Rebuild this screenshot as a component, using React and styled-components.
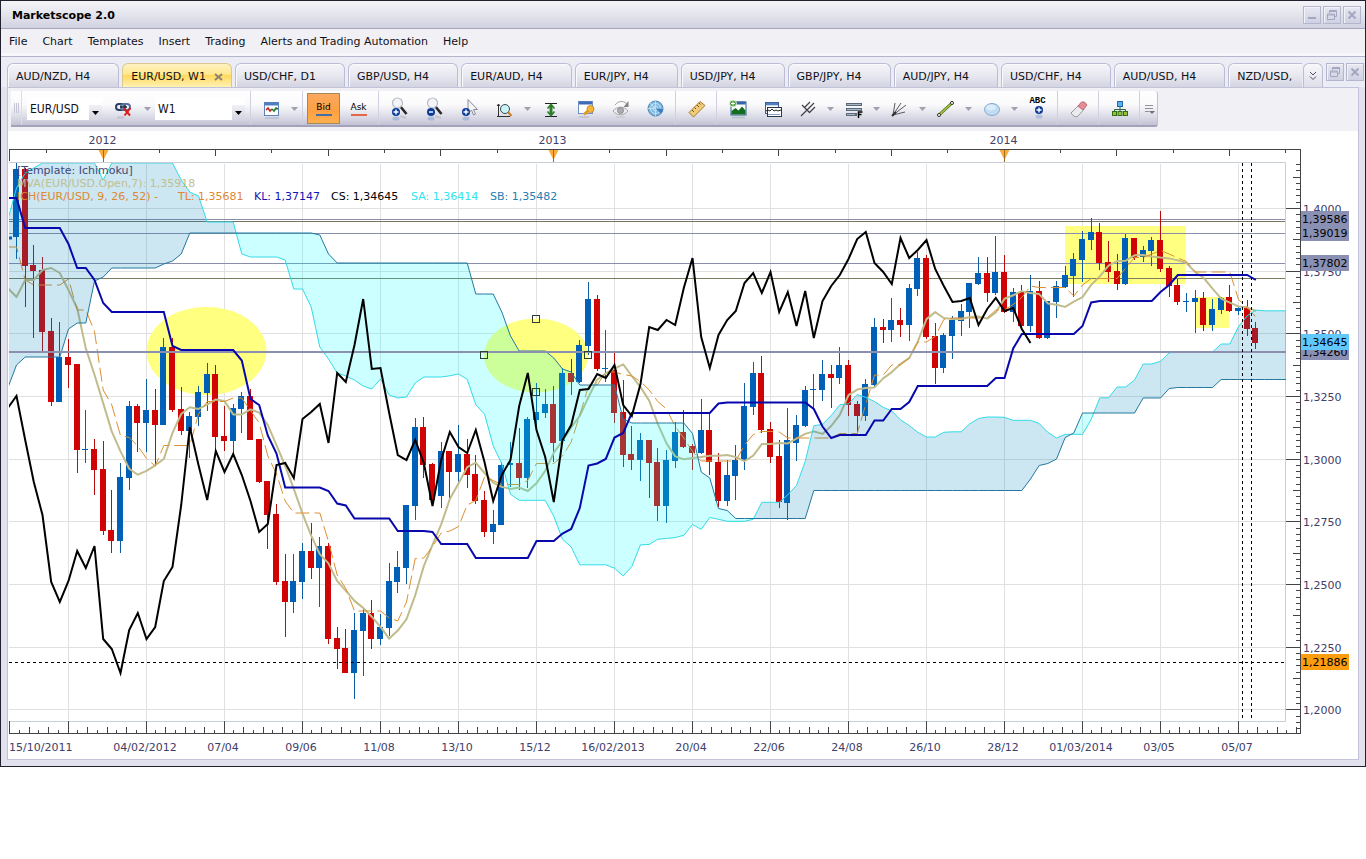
import React from "react";
import styled, { createGlobalStyle, css } from "styled-components";

const GlobalStyle = createGlobalStyle`
  * { box-sizing: border-box; }
  body { margin: 0; background: #ffffff; font-family: "DejaVu Sans", Verdana, sans-serif; font-size: 11px; color: #101018; }
  button, select { font: inherit; color: inherit; }
`;

/* ---------- window shell ---------- */

const Window = styled.div`
  display: flex;
  flex-direction: column;
  border: 1px solid #20202e;
  background: #e2e2ee;
`;

const TitleBar = styled.header`
  display: flex;
  align-items: center;
  justify-content: space-between;
  height: 28px;
  padding: 0 4px 0 11px;
  background: linear-gradient(#f3f3f7, #e6e6ee 45%, #d0d2e0);
  border-bottom: 1px solid #a6a6c2;
`;

const Title = styled.h1`
  margin: 0;
  padding-top: 2px;
  font-size: 11px;
  font-weight: 700;
  color: #000000;
`;

const FrameButtons = styled.div`
  display: flex;
  gap: 2px;
`;

const FrameButton = styled.button`
  display: flex;
  align-items: center;
  justify-content: center;
  width: 18px;
  height: 18px;
  padding: 0;
  border: 1px solid #b4b6ce;
  background: linear-gradient(#e8e8f2, #cfd1e2);
  box-shadow: inset 1px 1px 0 #f2f2f8;
`;

const MenuBar = styled.nav`
  display: flex;
  align-items: center;
  gap: 15px;
  height: 28px;
  padding: 0 8px 2px;
  background: #f0f0f5;
  border-bottom: 1px solid #b4b4cc;
  box-shadow: inset 0 -3px 0 #f7f7fb;
`;

const MenuItem = styled.button`
  border: 0;
  padding: 0;
  background: none;
  white-space: nowrap;
  color: #101018;
`;

const TabStrip = styled.div`
  display: flex;
  padding: 6px 1px 0 6px;
  background: #ececf4;
`;

const Tabs = styled.div`
  display: flex;
  flex: 1;
  gap: 3px;
  min-width: 0;
  overflow: hidden;
`;

const Tab = styled.button`
  display: flex;
  flex: none;
  align-items: center;
  gap: 8px;
  height: 24px;
  padding: 2px ${(p) => (p.$active ? 8 : 28)}px 0 8px;
  border: 1px solid #bcbcd6;
  border-bottom: 0;
  border-radius: 6px 6px 0 0;
  background: linear-gradient(#f4f4f8, #e8e8f0 50%, #d4d4e2);
  box-shadow: inset 1px 1px 0 #fafafd;
  white-space: nowrap;
  color: #101018;
  ${(p) =>
    p.$active &&
    css`
      border-color: #d8c890;
      background: linear-gradient(#fff2c0, #ffe890 45%, #ffd95c 50%, #fff2b4);
      box-shadow: none;
    `}
`;

const OverflowTab = styled.button`
  display: flex;
  align-items: center;
  justify-content: center;
  width: 20px;
  height: 24px;
  margin: 0 3px 0 1px;
  padding: 0;
  border: 1px solid #bcbcd6;
  border-bottom: 0;
  border-radius: 6px 6px 0 0;
  background: linear-gradient(#f8f8fb, #dedee9);
`;

const ChildButtons = styled(FrameButtons)`
  height: 18px;
`;

const Workspace = styled.main`
  padding: 0 6px 6px;
  background: #e2e2ee;
`;

const Panel = styled.section`
  border: 1px solid #c2c2d8;
  background: #ffffff;
`;

/* ---------- toolbar ---------- */

const ToolArea = styled.div`
  height: 43px;
  padding: 3px;
  background: #f0f0f5;
`;

const Toolbar = styled.div`
  display: inline-flex;
  align-items: stretch;
  height: 36px;
  border-bottom: 2px solid #a2a2ba;
  border-right: 1px solid #c0c0d2;
  border-radius: 0 3px 3px 0;
  background: linear-gradient(#ffffff, #fafafc 40%, #dcdce8 75%, #c2c2d4);
`;

const Grip = styled.div`
  display: flex;
  align-items: center;
  justify-content: center;
  gap: 1px;
  width: 11px;
  margin-right: 5px;
  border-right: 1px solid #dcdce8;
`;

const GripLine = styled.span`
  width: 1px;
  height: 10px;
  background: #c4c4d2;
`;

const Combo = styled.label`
  display: grid;
  grid-template-columns: 1fr 13px;
  align-self: center;
  width: ${(p) => (p.$wide ? 90 : 75)}px;
  height: 22px;
  margin: 2px ${(p) => (p.$wide ? 3 : 5)}px 0 ${(p) => (p.$wide ? 2 : 0)}px;
  background: #ffffff;
`;

const ComboSelect = styled.select`
  grid-area: 1 / 1 / 2 / 3;
  min-width: 0;
  padding: 0 15px 0 3px;
  border: 0;
  appearance: none;
  background: transparent;
  font-family: "DejaVu Sans Condensed", "DejaVu Sans", Tahoma, sans-serif;
  font-size: 12px;
`;

const ComboArrow = styled.span`
  grid-area: 1 / 2 / 2 / 3;
  display: flex;
  align-items: center;
  justify-content: center;
  align-self: end;
  height: 15px;
  background: linear-gradient(#f0f0f6, #d4d4e0);
  pointer-events: none;
`;

const ToolButton = styled.button`
  display: flex;
  flex-direction: column;
  align-items: center;
  justify-content: center;
  width: ${(p) => (p.$menu ? 11 : p.$last ? 14 : 35)}px;
  padding: 2px 0 0;
  border: 0;
  background: none;
`;

const PriceButton = styled(ToolButton)`
  width: 33px;
  margin: 2px 1px 1px;
  padding: 0;
  gap: 1px;
  font-size: 9px;
  line-height: 12px;
  color: #000000;
  ${(p) =>
    p.$pressed &&
    css`
      border: 1px solid #9c8a5c;
      background: linear-gradient(#fba860, #ffa040 60%, #ffb050);
    `}
`;

const Underline = styled.span`
  width: 16px;
  height: 2px;
  background: ${(p) => p.$color};
`;

const Separator = styled.span`
  width: 6px;
  border-right: 3px solid transparent;
  background: linear-gradient(90deg, transparent 2px, #d0d0e0 2px) no-repeat;
`;

const Icon = ({ children, size = 24 }) => (
  <svg width={size} height={size} viewBox={`0 0 ${size} ${size}`} fill="none" aria-hidden="true">
    {children}
  </svg>
);

const DownArrow = ({ color = "#a0a0b0" }) => (
  <svg width="7" height="4" viewBox="0 0 7 4" aria-hidden="true">
    <path d="M0 0h7L3.5 4z" fill={color} />
  </svg>
);

const PlusBadge = ({ x, y, minus }) => (
  <g>
    <circle cx={x} cy={y} r="4" fill="#0c3c98" />
    <path d={minus ? `M${x - 2} ${y}h4` : `M${x - 2.5} ${y}h5M${x} ${y - 2.5}v5`} stroke="#fff" strokeWidth="1.4" />
    <ellipse cx={x} cy={y + 6.5} rx="3.5" ry="2" fill="#4c78c0" opacity=".3" />
  </g>
);

const ICONS = {
  link: (
    <>
      <rect x="3" y="7" width="9" height="6" rx="3" stroke="#2c4066" strokeWidth="2" />
      <rect x="8" y="7" width="9" height="6" rx="3" stroke="#58709c" strokeWidth="2" />
      <path d="M7 10h7" stroke="#20304c" strokeWidth="1.6" />
      <path d="M11 11.5l6 7M17.5 11l-6 7.500" stroke="#dc1c1c" strokeWidth="2" />
      <path d="M4 20.500h7" stroke="#a0a0b0" strokeWidth="2" opacity=".4" />
    </>
  ),
  chart: (
    <>
      <rect x="4.500" y="5.500" width="14" height="13" fill="#fff" stroke="#5c84b8" />
      <path d="M5 7h13" stroke="#4c7cc4" strokeWidth="3" />
      <path d="M6 13l2-2 2 3 2-2" stroke="#c02020" strokeWidth="1.500" />
      <path d="M12 12l2 2 2-3 2 1" stroke="#207828" strokeWidth="1.500" />
      <path d="M5 21h14" stroke="#a0a8c0" strokeWidth="2" opacity=".4" />
    </>
  ),
  zoomIn: (
    <>
      <path d="M12 9l6.500 8" stroke="#282828" strokeWidth="2.600" />
      <circle cx="9.500" cy="6" r="5" fill="#f2f4f8" stroke="#b8bcc4" strokeWidth="1.200" />
      <path d="M12 19l6 2" stroke="#a0a0b0" strokeWidth="2" opacity=".4" />
      <PlusBadge x={8} y={15} />
    </>
  ),
  zoomOut: (
    <>
      <path d="M12 9l6.500 8" stroke="#282828" strokeWidth="2.600" />
      <circle cx="9.500" cy="6" r="5" fill="#f2f4f8" stroke="#b8bcc4" strokeWidth="1.200" />
      <path d="M12 19l6 2" stroke="#a0a0b0" strokeWidth="2" opacity=".4" />
      <PlusBadge x={8} y={15} minus />
    </>
  ),
  cursor: (
    <>
      <path d="M10 2.500v14l3.500-3.500 2 5 2-1-2-4.500h4z" fill="#f4f4f8" stroke="#8c8c98" />
      <PlusBadge x={8} y={15} />
    </>
  ),
  zoomAxis: (
    <>
      <path d="M5.500 7v12M4 9l1.500-2L7 9M4 19.500h13" stroke="#303030" />
      <circle cx="12" cy="12" r="4.500" fill="#c8f4f8" stroke="#404850" />
      <path d="M15 15l3.500 4" stroke="#d08020" strokeWidth="2" />
    </>
  ),
  height: (
    <>
      <path d="M6 6.500h12M6 19.500h12" stroke="#202020" />
      <path d="M12 8v10" stroke="#2c7c28" strokeWidth="3" />
      <path d="M8.500 11.500L12 7.500l3.500 4M8.500 14.500l3.500 4 3.500-4" stroke="#2c7c28" strokeWidth="1.600" />
    </>
  ),
  windowKey: (
    <>
      <rect x="4.500" y="4.500" width="14" height="12" fill="#fff" stroke="#6c90c4" />
      <path d="M5 6h13" stroke="#3c6cb8" strokeWidth="3" />
      <path d="M10 17.500l5-4.500" stroke="#e09820" strokeWidth="3" />
      <circle cx="16.500" cy="12" r="3.500" fill="#f4b83c" stroke="#d08c18" />
      <path d="M5 20h10" stroke="#a0a8c0" strokeWidth="2" opacity=".4" />
    </>
  ),
  eye: (
    <>
      <path d="M4 14c4-5 11-5 15 0-4 5-11 5-15 0z" fill="#eeeef2" stroke="#a4a4a4" />
      <circle cx="11.500" cy="13.500" r="3" fill="#acacb0" stroke="#8c8c90" />
      <path d="M6 8c3-4 8-5 12-1" stroke="#a0a0a0" />
      <path d="M19.500 4v6h-5z" fill="#848484" />
      <path d="M7 20h9" stroke="#b0b0b8" opacity=".6" />
    </>
  ),
  globe: (
    <>
      <circle cx="11.500" cy="11.500" r="7.500" fill="#7cb8e0" stroke="#4c84b4" />
      <circle cx="11.500" cy="11.500" r="5" stroke="#c8e4f4" />
      <circle cx="11.500" cy="11.500" r="2.500" stroke="#c8e4f4" />
      <path d="M4 11.500h15M11.500 4v15M6 6l11 11" stroke="#c8e4f4" strokeWidth=".8" />
      <path d="M11.500 11.500L17 17a7.500 7.500 0 0 0 2-5.500z" fill="#3c80bc" />
    </>
  ),
  ruler: (
    <>
      <path d="M4 15.500L15 4.500l5 4L8.500 20z" fill="#f0cc78" stroke="#a8782c" />
      <path d="M7 13l2 2M9.500 10.500l1.500 1.500M12 8l2 2M14 6l1.500 1.500" stroke="#70501c" />
    </>
  ),
  picture: (
    <>
      <rect x="5" y="5" width="15" height="13" fill="#fff" stroke="#2c5c98" />
      <path d="M5.500 6h14" stroke="#3464a8" strokeWidth="3" />
      <path d="M5.500 17.500V14l4-3 3 2.500 3.500-4 3.500 4v4z" fill="#146c20" />
      <circle cx="7" cy="6.500" r="3.500" fill="#4c9c3c" stroke="#e8f0e0" />
      <path d="M5 6.500h4M7 4.500v4" stroke="#fff" />
      <path d="M6 20.500h13" stroke="#80a090" strokeWidth="2" opacity=".35" />
    </>
  ),
  windows: (
    <>
      <rect x="4.500" y="5.500" width="13" height="11" fill="#fff" stroke="#385c90" />
      <path d="M5 7h12" stroke="#5080c0" strokeWidth="2.600" />
      <rect x="6.500" y="10.500" width="14" height="9" fill="#fff" stroke="#283848" />
      <path d="M5 14l2-1 2 1 2-2 2 2 2-1 2 1 3-1" stroke="#202020" />
      <path d="M7 17.500h12" stroke="#88a0c8" />
    </>
  ),
  pitchfork: <path d="M5 19L18 6M6 8l8 8M8.500 10.500L14 5M13.500 15.500L19 10" stroke="#404048" strokeWidth="1.200" />,
  fibo: (
    <>
      <path d="M4 7.500h16M4 12.500h16M4 17.500h11" stroke="#586878" strokeWidth="3" />
      <path d="M5 7.500h14M5 12.500h14M5 17.500h8" stroke="#a8b8c4" />
      <path d="M16.500 21v-6h4M16.500 17.500h3" stroke="#000" strokeWidth="1.500" />
    </>
  ),
  fan: (
    <>
      <path d="M5 18L7 6M5 18l8-12M5 18L18 8M5 18l12-3" stroke="#58585c" />
      <path d="M4 19l4-4" stroke="#303030" strokeWidth="2" />
    </>
  ),
  line: (
    <>
      <path d="M5 18L18 6" stroke="#506c1c" strokeWidth="3" />
      <path d="M5 18L18 6" stroke="#a8d038" strokeWidth="1.400" />
      <circle cx="5" cy="18" r="1.600" fill="#e4e4d8" stroke="#404030" />
      <circle cx="18" cy="6" r="1.600" fill="#e4e4d8" stroke="#404030" />
    </>
  ),
  ellipse: (
    <>
      <ellipse cx="12" cy="12.500" rx="7.500" ry="6" fill="#c0dcf4" stroke="#84a8cc" />
      <ellipse cx="11" cy="10.500" rx="5" ry="3" fill="#dcecfa" />
    </>
  ),
  eraser: (
    <>
      <path d="M4 16l8-8 5 4.500-7 7.500q-4 0-6-4z" fill="#ececf0" stroke="#98989c" />
      <path d="M11 9l3.500-4q3-1.500 5.500 3l-4 5z" fill="#e88c94" stroke="#b86c78" />
    </>
  ),
  tree: (
    <>
      <path d="M12 9v4M6.500 15v-2.500h11V15M12 12v3" stroke="#286840" />
      <rect x="9.500" y="4.500" width="5" height="5" fill="#5cb0f0" stroke="#2068b0" />
      <rect x="4.500" y="14.500" width="4" height="4" fill="#94c434" stroke="#386c14" />
      <rect x="10" y="14.500" width="4" height="4" fill="#94c434" stroke="#386c14" />
      <rect x="15.500" y="14.500" width="4" height="4" fill="#94c434" stroke="#386c14" />
    </>
  ),
};

const AbcIcon = styled.span`
  display: flex;
  flex-direction: column;
  align-items: center;
  font-family: "Liberation Mono", monospace;
  font-size: 9px;
  font-weight: 700;
  line-height: 8px;
  color: #000000;
`;

const Glyph = ({ kind }) => (
  <Icon size={12}>
    {kind === "minimize" && <path d="M2 9h8" stroke="#a4a6c0" strokeWidth="2" />}
    {kind === "restore" && (
      <path d="M3.500 4V1.500h7v6H8M1.500 5h7v5.500h-7zM1.500 6h7M3.500 2.500h7" stroke="#a4a6c0" />
    )}
    {kind === "close" && <path d="M2.500 2.500l7 7M9.500 2.500l-7 7" stroke="#a4a6c0" strokeWidth="2" />}
  </Icon>
);

/* ---------- chart data: vertical positions of high, body top, body bottom, low ---------- */

const CANDLES = `b163 169 237 259|r168 169 266 307|r245 265 271 338|r257 270 332 351|r318 331 402 406|b322 357 402 402|r339 357 365 388|r364 364 450 473|b410 449 450 463|r439 449 470 495
r441 469 531 535|r490 530 541 553|b463 477 541 553|b401 406 478 490|r404 406 423 452|b379 410 423 452|r389 410 425 465|b338 347 425 425|r338 347 410 412|r387 409 431 435
b412 416 431 458|b386 392 417 426|b363 374 393 411|r365 374 437 450|r406 436 441 451|b404 408 441 457|b392 396 409 433|r389 396 440 440|r439 439 482 483|r481 481 515 549
r504 514 582 585|r554 581 602 637|b554 581 602 613|b543 551 582 599|r523 551 568 579|b537 546 568 607|r543 546 639 644|r627 638 649 669|r629 648 673 673|b613 630 673 699
b609 613 631 676|r600 613 639 649|b614 627 639 645|b563 581 628 636|b551 567 582 593|b505 505 568 584|b418 427 506 520|r417 427 465 478|r463 464 500 504|b442 451 496 508
r451 451 472 498|b425 454 472 485|r439 454 475 488|r455 474 501 504|r491 500 532 537|b510 524 532 544|b462 465 525 525|b442 463 465 487|r428 463 478 490|b417 419 478 488
b383 412 420 430|b389 404 413 418|r386 404 443 462|b368 373 441 443|r359 373 382 395|b340 345 382 383|b282 299 346 355|r295 299 369 371|b330 368 369 382|r353 370 413 423
r380 412 455 467|r426 454 460 470|b433 440 460 481|r440 440 463 498|r448 462 506 521|b450 460 506 523|b422 432 461 468|r410 432 447 448|r444 446 453 470|b399 430 453 454
r413 430 462 475|r453 462 501 507|b460 475 501 506|b445 460 476 500|b383 406 460 470|b362 373 407 415|r356 373 430 433|r422 429 457 463|r440 456 502 508|b408 440 503 520
b415 425 443 461|b386 390 426 427|b374 389 390 410|b360 374 390 401|r365 374 378 408|b347 365 378 384|r360 365 405 416|r401 404 416 432|b379 384 416 421|b318 327 385 387
r319 327 330 343|b298 320 330 342|r308 320 325 337|b284 288 325 341|b252 258 289 296|r255 258 337 339|r323 336 368 384|b333 335 368 373|b316 320 336 359|b304 311 321 336
b283 283 312 328|b257 273 284 285|r257 273 293 302|b236 272 293 295|r255 272 312 313|b288 292 312 322|r285 292 326 327|b275 291 326 332|r281 291 338 339|b301 301 338 339
b281 286 302 318|b266 275 287 288|b253 259 276 297|b231 239 260 282|b218 232 240 250|r223 232 263 270|r241 262 272 282|r254 271 284 290|b234 238 284 285|r238 238 258 260
b246 250 257 262|b237 240 251 266|r211 240 269 272|r266 268 286 297|r279 285 302 305|b293 301 302 312|b290 298 302 333|r292 298 325 331|b299 309 325 331|b297 298 310 314
r285 297 311 312|b306 308 311 315|r300 308 329 336|r322 328 343 349`
  .split(/[|\n]/)
  .map((row) => {
    const [high, top, bottom, low] = row.slice(1).split(" ").map(Number);
    const up = row[0] === "b";
    return { up, high, top, bottom, low, open: up ? bottom : top, close: up ? top : bottom };
  });

/* readings whose look-back starts before the first visible candle */
const repeat = (value, n) => Array(n).fill(value);
const TENKAN_SEED = [247, 280, 285, 285, 285, 285, 279, 310, 310];
const KIJUN_SEED = [198, ...repeat(228, 5), 244, 268, 268, 280, 303, ...repeat(312, 7), 346, ...repeat(350, 7)];
const AVERAGE_SEED = [297, 280, 280, 270, 268, 273];
const SPAN_A_SEED = [
  188, 173, 168, ...repeat(163, 7), 180, ...repeat(163, 8), 180, 192, 196, ...repeat(222, 4), 254, ...repeat(257, 4),
  260, 289, 289, 307, 347, 359, 373, 376, 380, 386, 389, 379, 395, 398, 397, 383, 377, 377, 377,
];
const SPAN_B_SEED = [
  365, ...repeat(357, 5), 329, 323, 323, 281, 277, ...repeat(268, 6), 264, 261, 254, ...repeat(233, 15), 235, 254,
  ...repeat(263, 16), 294, 294, 294, 312, 336, ...repeat(351, 4), 358, 369, 372, ...repeat(385, 5), 419,
  ...repeat(423, 7),
];

const midRange = (i, n) => {
  const slice = CANDLES.slice(i - n + 1, i + 1);
  return (Math.min(...slice.map((c) => c.high)) + Math.max(...slice.map((c) => c.low))) / 2;
};

const TENKAN = CANDLES.map((_, i) => TENKAN_SEED[i] ?? midRange(i, 9));
const KIJUN = CANDLES.map((_, i) => KIJUN_SEED[i] ?? midRange(i, 26));
const AVERAGE = CANDLES.map(
  (_, i) => AVERAGE_SEED[i] ?? CANDLES.slice(i - 6, i + 1).reduce((sum, c) => sum + c.open, 0) / 7
);
const SPAN_A = Array.from({ length: 148 }, (_, i) => SPAN_A_SEED[i] ?? (TENKAN[i - 26] + KIJUN[i - 26]) / 2);
const SPAN_B = Array.from({ length: 148 }, (_, i) => SPAN_B_SEED[i] ?? midRange(i - 26, 52));
const CHIKOU = CANDLES.slice(26).map((c) => c.close);

const STEP = 26 / 3;
const xAt = (i) => 16.5 + i * STEP;
const toPoints = (first, values) => [[xAt(-1), first], ...values.map((y, i) => [xAt(i), y])];
const path = (points) => "M" + points.map(([x, y]) => `${x.toFixed(1)} ${y.toFixed(1)}`).join("L");

const A_POINTS = toPoints(220, SPAN_A);
const B_POINTS = toPoints(388, SPAN_B);

/* split the cloud where the two spans cross */
const CLOUD = (() => {
  const runs = [];
  let run = { bull: A_POINTS[0][1] < B_POINTS[0][1], a: [A_POINTS[0]], b: [B_POINTS[0]] };
  for (let i = 1; i < A_POINTS.length; i++) {
    const [x, a] = A_POINTS[i];
    const b = B_POINTS[i][1];
    const bull = a < b;
    if (bull !== run.bull) {
      const [px, pa] = A_POINTS[i - 1];
      const pb = B_POINTS[i - 1][1];
      const t = (pb - pa) / (pb - pa + a - b);
      const cross = [px + (x - px) * t, pa + (a - pa) * t];
      run.a.push(cross);
      run.b.push(cross);
      runs.push(run);
      run = { bull, a: [cross], b: [cross] };
    }
    run.a.push([x, a]);
    run.b.push([x, b]);
  }
  runs.push(run);
  return runs;
})();

const DATES = [
  "04/02/2012", "07/04", "09/06", "11/08", "13/10", "15/12", "16/02/2013", "20/04",
  "22/06", "24/08", "26/10", "28/12", "01/03/2014", "03/05", "05/07",
];
const PRICES = ["1,4000", "1,3750", "1,3500", "1,3250", "1,3000", "1,2750", "1,2500", "1,2250", "1,2000"];
const priceY = (k) => Math.round(208 + k * 62.67) + 0.5;
const MARKS = [
  ["1,39586", 211, "#8a90b4"],
  ["1,39019", 225, "#8a90b4"],
  ["1,37802", 255, "#8a90b4"],
  ["1,34260", 344, "#8a90b4"],
  ["1,34645", 334, "#62c8fc"],
  ["1,21886", 654, "#fc9c10"],
];
const LEVELS = [
  [219.5, "#8a8eaa"],
  [221.5, "#787464"],
  [233.5, "#8a8eaa"],
  [263.5, "#8a8eaa"],
  [278.5, "#7c7c5c"],
];
const LEGEND = [
  [17, 174, "[Template: Ichimoku]", "#404878"],
  [17, 187, "MVA(EUR/USD.Open,7): 1,35918", "#c0c090"],
  [17, 200, "ICH(EUR/USD, 9, 26, 52) -", "#e08830"],
  [178, 200, "TL: 1,35681", "#e08830"],
  [254, 200, "KL: 1,37147", "#1414b4"],
  [331, 200, "CS: 1,34645", "#000000"],
  [411, 200, "SA: 1,36414", "#30e4f0"],
  [490, 200, "SB: 1,35482", "#2480b4"],
];

const ChartSvg = styled.svg`
  display: block;
  width: 100%;
  height: auto;
  background: #ffffff;
  font-size: 11px;
`;

function Chart() {
  return (
    <ChartSvg viewBox="8 131 1350 628" role="img" aria-label="EUR/USD weekly chart">
      <clipPath id="plot">
        <rect x="9" y="163" width="1277" height="558" />
      </clipPath>

      <g stroke="#e0e0e0" shapeRendering="crispEdges">
        {Array.from({ length: 16 }, (_, k) => (
          <path key={k} d={`M${68.5 + 78 * k} 164V720`} />
        ))}
        {PRICES.map((p, k) => (
          <path key={p} d={`M9 ${priceY(k)}H1285`} />
        ))}
      </g>
      <path d="M9 162.500H1285.500V721.500H9" fill="none" stroke="#c8ced6" strokeWidth="1" />

      <g fill="#ffff80">
        <ellipse cx="206.500" cy="351" rx="60" ry="44" />
        <ellipse cx="536" cy="355.500" rx="52" ry="37" />
        <rect x="1065" y="226" width="121" height="58" />
        <rect x="1196" y="297" width="33" height="31" />
      </g>

      <g clipPath="url(#plot)">
        <g shapeRendering="crispEdges">
          {LEVELS.map(([y, color]) => (
            <path key={y} d={`M9 ${y}H1285`} stroke={color} />
          ))}
        </g>
        <path d="M9 238h3" stroke="#0060b8" strokeWidth="3" />
        <g shapeRendering="crispEdges">
          {CANDLES.map((c, i) => {
            const x = Math.round(xAt(i) - 0.5);
            return (
              <g key={i} fill={c.up ? "#0060b8" : "#d00404"}>
                <rect x={x} y={c.high} width="1" height={c.low - c.high} fill={c.up ? "#0c5ca4" : "#b80c0c"} />
                <rect x={x - 3} y={c.top} width="6" height={Math.max(c.bottom - c.top, 1)} />
              </g>
            );
          })}
        </g>
        <path d={path(toPoints(288, AVERAGE))} fill="none" stroke="#c0bc8c" strokeWidth="2" strokeLinejoin="round" />
        <path d={path(toPoints(247, TENKAN))} fill="none" stroke="#dc9030" strokeWidth="1" strokeDasharray="14 5" />
        {CLOUD.map((run, i) => (
          <path
            key={i}
            d={`${path([...run.a, ...[...run.b].reverse()])}Z`}
            fill={run.bull ? "#0080c0" : "#00ffff"}
            fillOpacity=".2"
          />
        ))}
        <path d={path(A_POINTS)} fill="none" stroke="#30dce8" />
        <path d={path(B_POINTS)} fill="none" stroke="#2478a0" />
        <path d="M9 352H1286" stroke="#8c90b0" strokeWidth="2" />
        <path d={path(toPoints(198, KIJUN))} fill="none" stroke="#0808ac" strokeWidth="2" />
        <path d={path(toPoints(408, CHIKOU))} fill="none" stroke="#000000" strokeWidth="2" />
        <path d="M9 662.500H1286M1242.500 163V720M1251.500 163V720" stroke="#000000" strokeDasharray="3 3" />
        <g fill="none" stroke="#304030" shapeRendering="crispEdges">
          <rect x="532.500" y="315.500" width="7" height="7" />
          <rect x="480.500" y="351.500" width="7" height="7" />
          <rect x="584.500" y="351.500" width="7" height="7" />
          <rect x="532.500" y="388.500" width="7" height="7" />
        </g>
      </g>

      {LEGEND.map(([x, y, label, color]) => (
        <text key={label} x={x} y={y} fill={color}>{label}</text>
      ))}

      <g stroke="#444448" fill="none" shapeRendering="crispEdges">
        <path d="M9.500 161V149.500H1300.500V733.500H9.500V721" />
        {Array.from({ length: 23 }, (_, k) => (
          <path key={k} d={`M${Math.round(46 + 56.33 * k) + 0.5} 150v${k % 2 ? 6 : 3}`} />
        ))}
        {Array.from({ length: 133 }, (_, k) => {
          const n = k - 5;
          const x = Math.floor(68 + 9.75 * n) + 0.5;
          return x < 1300 && <path key={k} d={`M${x} 733v${n % 8 === 0 ? -12 : n % 2 === 0 ? -6 : -3}`} />;
        })}
        {Array.from({ length: 91 }, (_, k) => {
          const n = k - 7;
          return (
            <path
              key={k}
              d={`M1300 ${Math.round(208 + 6.267 * n) + 0.5}h${n % 10 === 0 ? -14 : n % 5 === 0 ? -7 : -4}`}
            />
          );
        })}
      </g>

      {[103.5, 553.5, 1004.5].map((x, i) => (
        <g key={x}>
          <path d={`M${x - 5} 150h10l-5 10z`} fill="#fcac38" />
          <path d={`M${x} 150v12`} stroke="#9c6c20" />
          <text x={x - 1} y="144" textAnchor="middle" fill="#404068">{2012 + i}</text>
        </g>
      ))}
      <g fill="#404068">
        <text x="9" y="751">15/10/2011</text>
        {DATES.map((date, k) => (
          <text key={date} x={145 + 78 * k} y="751" textAnchor="middle">{date}</text>
        ))}
        {PRICES.map((p, k) => (
          <text key={p} x="1303" y={priceY(k) + 4.5}>{p}</text>
        ))}
      </g>
      {MARKS.map(([label, y, color]) => (
        <g key={label}>
          <rect x="1301" y={y} width="48" height="16" fill={color} />
          <text x="1302" y={y + 12} fill="#000000">{label}</text>
        </g>
      ))}
    </ChartSvg>
  );
}

/* ---------- page ---------- */

const MENU = ["File", "Chart", "Templates", "Insert", "Trading", "Alerts and Trading Automation", "Help"];
const TABS = [
  "AUD/NZD, H4", "EUR/USD, W1", "USD/CHF, D1", "GBP/USD, H4", "EUR/AUD, H4", "EUR/JPY, H4",
  "USD/JPY, H4", "GBP/JPY, H4", "AUD/JPY, H4", "USD/CHF, H4", "AUD/USD, H4", "NZD/USD,",
];
const TOOLS = [
  "zoomIn", "zoomOut", "cursor", "zoomAxis", "menu", "height", "windowKey", "eye", "globe", "|",
  "ruler", "|", "picture", "windows", "pitchfork", "menu", "fibo", "menu", "fan", "menu", "line", "menu",
  "ellipse", "menu", "abc", "|", "eraser", "|", "tree", "|",
];

function Tool({ name }) {
  if (name === "|") return <Separator />;
  if (name === "menu")
    return (
      <ToolButton $menu aria-label="More options">
        <DownArrow />
      </ToolButton>
    );
  if (name === "abc")
    return (
      <ToolButton aria-label="Text label">
        <AbcIcon>
          ABC
          <svg width="16" height="16" viewBox="0 0 16 16" aria-hidden="true">
            <PlusBadge x={10} y={5} />
          </svg>
        </AbcIcon>
      </ToolButton>
    );
  return (
    <ToolButton aria-label={name}>
      <Icon>{ICONS[name]}</Icon>
    </ToolButton>
  );
}

export default function App() {
  return (
    <>
      <GlobalStyle />
      <Window>
        <TitleBar>
          <Title>Marketscope 2.0</Title>
          <FrameButtons>
            <FrameButton aria-label="Minimize"><Glyph kind="minimize" /></FrameButton>
            <FrameButton aria-label="Restore"><Glyph kind="restore" /></FrameButton>
            <FrameButton aria-label="Close"><Glyph kind="close" /></FrameButton>
          </FrameButtons>
        </TitleBar>
        <MenuBar>
          {MENU.map((item) => (
            <MenuItem key={item}>{item}</MenuItem>
          ))}
        </MenuBar>
        <TabStrip>
          <Tabs>
            {TABS.map((tab, i) => (
              <Tab key={tab} $active={i === 1}>
                {tab}
                {i === 1 && (
                  <svg width="9" height="8" viewBox="0 0 9 8" aria-hidden="true">
                    <path d="M1 1l7 6M8 1L1 7" stroke="#8c8470" strokeWidth="2" />
                  </svg>
                )}
              </Tab>
            ))}
          </Tabs>
          <OverflowTab aria-label="More tabs">
            <svg width="8" height="10" viewBox="0 0 8 10" fill="none" stroke="#505060" aria-hidden="true">
              <path d="M1 1l3 3 3-3M1 5.500l3 3 3-3" />
            </svg>
          </OverflowTab>
          <ChildButtons>
            <FrameButton aria-label="Restore chart"><Glyph kind="restore" /></FrameButton>
            <FrameButton aria-label="Close chart"><Glyph kind="close" /></FrameButton>
          </ChildButtons>
        </TabStrip>
        <Workspace>
          <Panel>
            <ToolArea>
              <Toolbar>
                <Grip><GripLine /><GripLine /><GripLine /></Grip>
                <Combo>
                  <ComboSelect aria-label="Instrument" defaultValue="EUR/USD">
                    <option>EUR/USD</option>
                  </ComboSelect>
                  <ComboArrow><DownArrow color="#000000" /></ComboArrow>
                </Combo>
                <ToolButton aria-label="Link"><Icon>{ICONS.link}</Icon></ToolButton>
                <Tool name="menu" />
                <Combo $wide>
                  <ComboSelect aria-label="Period" defaultValue="W1">
                    <option>W1</option>
                  </ComboSelect>
                  <ComboArrow><DownArrow color="#000000" /></ComboArrow>
                </Combo>
                <Separator />
                <Tool name="chart" />
                <Tool name="menu" />
                <Separator />
                <PriceButton $pressed>
                  Bid
                  <Underline $color="#4070a8" />
                </PriceButton>
                <PriceButton>
                  Ask
                  <Underline $color="#e46848" />
                </PriceButton>
                <Separator />
                {TOOLS.map((name, i) => (
                  <Tool key={i} name={name} />
                ))}
                <ToolButton $last aria-label="Toolbar options">
                  <svg width="10" height="11" viewBox="0 0 10 11" fill="none" aria-hidden="true">
                    <path d="M0 1.500h8M0 4.500h8M0 7.500h4" stroke="#909098" />
                    <path d="M4 7h6l-3 3z" fill="#707078" />
                  </svg>
                </ToolButton>
              </Toolbar>
            </ToolArea>
            <Chart />
          </Panel>
        </Workspace>
      </Window>
    </>
  );
}
